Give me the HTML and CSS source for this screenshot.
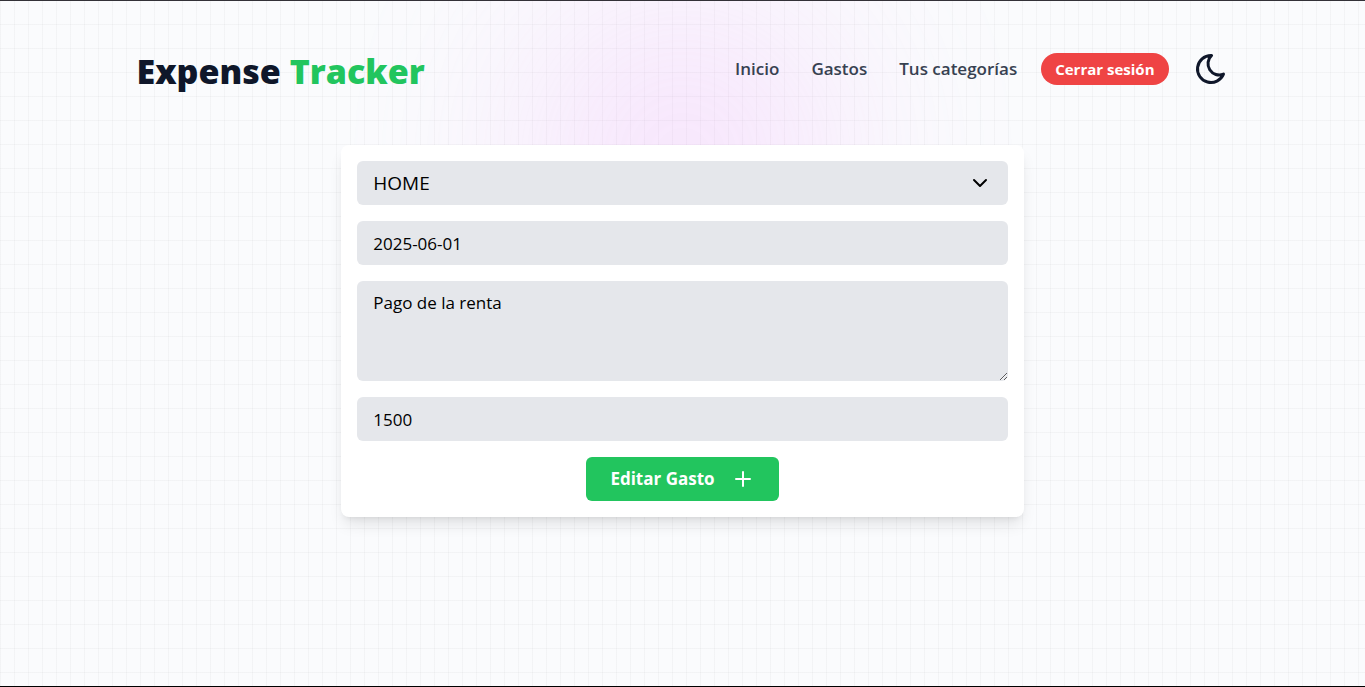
FILE: index.html
```html
<!DOCTYPE html>
<html lang="es">
<head>
  <meta charset="utf-8">
  <meta name="viewport" content="width=device-width, initial-scale=1">
  <title>Expense Tracker</title>
  <link rel="stylesheet" href="styles.css">
</head>
<body>
  <div class="glow" aria-hidden="true"></div>
  <header class="header">
    <h1 class="brand">Expense <span class="brand-accent">Tracker</span></h1>
    <nav class="nav">
      <a class="nav-link" href="#inicio">Inicio</a>
      <a class="nav-link" href="#gastos">Gastos</a>
      <a class="nav-link" href="#categorias">Tus categorías</a>
      <button class="logout" type="button">Cerrar sesión</button>
      <button class="theme" type="button" aria-label="Modo oscuro">
        <svg class="theme-icon" viewBox="0 0 24 24" fill="none" stroke="currentColor" stroke-width="2" stroke-linecap="round" stroke-linejoin="round"><path d="M12 3c.132 0 .263 0 .393 0a7.5 7.5 0 0 0 7.92 12.446a9 9 0 1 1 -8.313 -12.454z"/></svg>
      </button>
    </nav>
  </header>
  <main>
    <form class="card">
      <div class="select-wrap">
        <select class="field field-select" aria-label="Categoría">
          <option>HOME</option>
        </select>
        <svg class="chevron" viewBox="0 0 16 16" fill="none" stroke="currentColor" stroke-width="2" stroke-linecap="round" stroke-linejoin="round" aria-hidden="true"><path d="M2 5l6 6 6-6"/></svg>
      </div>
      <input class="field" type="text" value="2025-06-01" aria-label="Fecha">
      <textarea class="field field-area" aria-label="Descripción">Pago de la renta</textarea>
      <input class="field" type="text" value="1500" aria-label="Monto">
      <button class="submit" type="submit">
        Editar Gasto
        <svg class="plus" viewBox="0 0 24 24" fill="none" stroke="currentColor" stroke-width="2" stroke-linecap="round" aria-hidden="true"><path d="M12 5v14M5 12h14"/></svg>
      </button>
    </form>
  </main>
</body>
</html>
```
FILE: styles.css
```css
* {
  box-sizing: border-box;
}

body {
  position: relative;
  isolation: isolate;
  min-height: 100vh;
  margin: 0;
  overflow-x: hidden;
  border-top: 1px solid #333138;
  border-bottom: 1px solid #000;
  background-color: #fafbfd;
  background-image:
    linear-gradient(to right, #8080800f 1px, transparent 1px),
    linear-gradient(to bottom, #8080800f 1px, transparent 1px);
  background-size: 14px 24px;
  color: #0f172a;
  font-family: "Segoe UI", "Open Sans", "Noto Sans", sans-serif;
}

.glow {
  position: absolute;
  z-index: -1;
  top: 0;
  right: 0;
  left: 0;
  width: 310px;
  height: 310px;
  margin: 0 auto;
  border-radius: 50%;
  background: #e879f9;
  opacity: 0.2;
  filter: blur(100px);
}

.header {
  display: flex;
  align-items: center;
  justify-content: space-between;
  width: 80%;
  margin: 0 auto;
  padding: 48px 0 52px;
}

.brand {
  margin: 0;
  font-size: 34px;
  font-weight: 800;
  line-height: 44px;
}

.brand-accent {
  color: #22c55e;
}

.nav {
  display: flex;
  align-items: center;
  padding-bottom: 4px;
}

.nav-link {
  margin-right: 32px;
  color: #374151;
  font-size: 17px;
  font-weight: 600;
  line-height: 28px;
  text-decoration: none;
}

.nav-link:nth-of-type(3) {
  margin-right: 24px;
}

.logout {
  height: 32px;
  padding: 0 14px;
  border: 0;
  border-radius: 16px;
  background: #ef4444;
  color: #fff;
  font: 700 15px/24px "Segoe UI", "Open Sans", "Noto Sans", sans-serif;
}

.theme {
  display: flex;
  margin-left: 24px;
  padding: 0;
  border: 0;
  background: none;
  color: #0f172a;
}

.theme-icon {
  width: 36px;
  height: 36px;
}

.card {
  display: flex;
  flex-direction: column;
  gap: 16px;
  width: 50%;
  margin: 0 auto;
  padding: 16px;
  border-radius: 8px;
  background: #fff;
  box-shadow: 0 10px 15px -3px #0000001a, 0 4px 6px -4px #0000001a;
}

.select-wrap {
  display: grid;
  align-items: center;
}

.select-wrap > * {
  grid-area: 1 / 1;
}

.chevron {
  justify-self: end;
  width: 16px;
  height: 16px;
  margin-right: 20px;
  color: #000;
  pointer-events: none;
}

.field {
  display: block;
  width: 100%;
  height: 44px;
  margin: 0;
  padding: 8px 16px;
  border: 0;
  border-radius: 6px;
  background: #e5e7eb;
  color: #000;
  font: 400 17px/28px "Segoe UI", "Open Sans", "Noto Sans", sans-serif;
}

.field-select {
  appearance: none;
  font-size: 19px;
}

.field-area {
  height: 100px;
  resize: vertical;
}

.submit {
  display: flex;
  align-items: center;
  align-self: center;
  gap: 16px;
  height: 44px;
  padding: 0 24px;
  border: 0;
  border-radius: 6px;
  background: #22c55e;
  color: #fff;
  font: 700 17px/28px "Segoe UI", "Open Sans", "Noto Sans", sans-serif;
}

.plus {
  width: 24px;
  height: 24px;
}
```
